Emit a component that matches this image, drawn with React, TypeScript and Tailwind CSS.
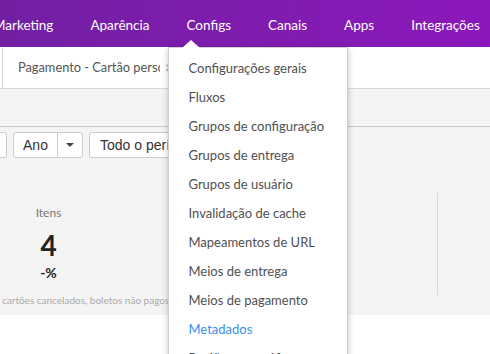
import React from 'react';

const navItems = ['Marketing', 'Aparência', 'Configs', 'Canais', 'Apps', 'Integrações'];

const menuItems = [
  'Configurações gerais',
  'Fluxos',
  'Grupos de configuração',
  'Grupos de entrega',
  'Grupos de usuário',
  'Invalidação de cache',
  'Mapeamentos de URL',
  'Meios de entrega',
  'Meios de pagamento',
  'Metadados',
  'Regiões geográficas',
];

const ConfigsMenu: React.FC = () => (
  <div className="absolute left-[-18px] top-full z-10">
    {/* caret */}
    <div className="absolute left-[14px] top-[-7px] w-0 h-0 border-l-[9px] border-r-[9px] border-b-[8px] border-l-transparent border-r-transparent border-b-white" />
    <div className="w-[180px] bg-white border border-[#d0d0d0] shadow-[0_2px_6px_rgba(0,0,0,0.25)] pt-[6px] pb-2">
      {menuItems.map((item) => (
        <div
          key={item}
          className={`h-[29px] leading-[29px] pl-[19px] text-[13px] whitespace-nowrap ${
            item === 'Metadados' ? 'text-[#3b8ef0]' : 'text-[#505050]'
          }`}
        >
          {item}
        </div>
      ))}
    </div>
  </div>
);

const App: React.FC = () => {
  return (
    <div className="w-[490px] h-[354px] overflow-hidden bg-white font-['Lato',sans-serif]">
      {/* top nav */}
      <div className="h-[47px] bg-gradient-to-r from-[#721fa3] to-[#8c17bb] flex">
        <div className="flex gap-[37px] ml-[-7px]">
          {navItems.map((item) => (
            <div
              key={item}
              className="relative h-[47px] flex items-center pt-[3px] text-white text-[13.5px] whitespace-nowrap"
            >
              {item}
              {item === 'Configs' && <ConfigsMenu />}
            </div>
          ))}
        </div>
      </div>

      {/* tabs */}
      <div className="h-[42px] border-b border-[#d8d8d8] flex">
        <div className="ml-[2px] border-l border-[#d8d8d8] flex items-center pl-[15px] pr-3 gap-[5px]">
          <span className="w-[142px] overflow-hidden whitespace-nowrap text-[12.8px] text-[#555]">
            Pagamento - Cartão personalizado
          </span>
          <span className="text-[#999] text-[15px]">×</span>
        </div>
      </div>

      {/* toolbar band */}
      <div className="h-[38px] bg-[#f4f4f4] border-b border-[#c8c8c8]" />

      {/* content */}
      <div className="bg-[#f4f4f4] h-[188px]">
        <div className="flex items-center pt-[5px] gap-[6px] ml-[-30px] font-['Liberation_Sans',Arial,sans-serif] text-[14px] text-[#333]">
          <div className="h-[26px] w-[37px] bg-white border border-[#ccc] rounded-[3px]" />
          <div className="flex h-[26px] bg-white border border-[#ccc] rounded-[3px]">
            <div className="w-[44px] flex items-center justify-center border-r border-[#ccc]">Ano</div>
            <div className="w-[24px] flex items-center justify-center">
              <div className="w-0 h-0 border-l-[4px] border-r-[4px] border-t-[4px] border-l-transparent border-r-transparent border-t-[#444]" />
            </div>
          </div>
          <div className="h-[26px] w-[120px] bg-white border border-[#ccc] rounded-[3px] flex items-center pl-[10px] whitespace-nowrap overflow-hidden">
            Todo o período
          </div>
        </div>

        <div className="flex mt-[35px] h-[102px]">
          <div className="w-[97px] flex flex-col items-center pt-[11px]">
            <div className="text-[12px] text-[#777]">Itens</div>
            <div className="text-[28px] font-bold text-[#222] leading-none mt-[9px]">4</div>
            <div className="text-[14px] font-bold text-[#222] leading-none mt-[7px]">-%</div>
          </div>
          <div className="w-[341px] border-r border-[#d8d8d8]" />
        </div>

        <div className="ml-[2px] mt-[-2px] text-[10px] text-[#aaa] whitespace-nowrap">
          cartões cancelados, boletos não pagos, pedidos cancelados
        </div>
      </div>
    </div>
  );
};

export default App;
